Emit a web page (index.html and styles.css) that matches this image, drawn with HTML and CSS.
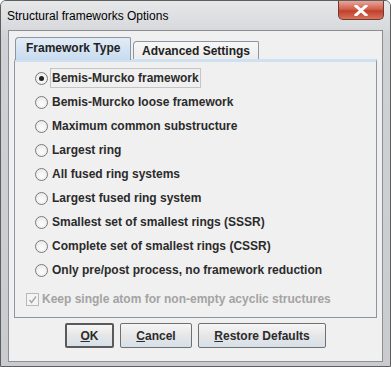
FILE: index.html
```html
<!DOCTYPE html>
<html>
<head>
<meta charset="utf-8">
<link rel="stylesheet" href="styles.css">
</head>
<body>
<div class="window">
  <div class="titlebar">
    <span class="title">Structural frameworks Options</span>
    <div class="close"><svg width="14" height="11" viewBox="0 0 14 11"><path d="M2 1 L12 10 M12 1 L2 10" stroke="#fff" stroke-width="3" stroke-linecap="square"/></svg></div>
  </div>
  <div class="client">
    <div class="tabs">
      <div class="tab active">Framework Type</div>
      <div class="tab">Advanced Settings</div>
    </div>
    <div class="panel">
      <div class="row"><span class="radio on"></span><span class="label focus">Bemis-Murcko framework</span></div>
      <div class="row"><span class="radio"></span><span class="label">Bemis-Murcko loose framework</span></div>
      <div class="row"><span class="radio"></span><span class="label">Maximum common substructure</span></div>
      <div class="row"><span class="radio"></span><span class="label">Largest ring</span></div>
      <div class="row"><span class="radio"></span><span class="label">All fused ring systems</span></div>
      <div class="row"><span class="radio"></span><span class="label">Largest fused ring system</span></div>
      <div class="row"><span class="radio"></span><span class="label">Smallest set of smallest rings (SSSR)</span></div>
      <div class="row"><span class="radio"></span><span class="label">Complete set of smallest rings (CSSR)</span></div>
      <div class="row"><span class="radio"></span><span class="label">Only pre/post process, no framework reduction</span></div>
      <div class="row check-row"><span class="check"><svg width="9" height="9" viewBox="0 0 9 9"><path d="M1.5 5 L3.5 7.5 L8 1.5" fill="none" stroke="#a8a8a8" stroke-width="1.4"/></svg></span><span class="label disabled">Keep single atom for non-empty acyclic structures</span></div>
    </div>
    <div class="buttons">
      <button class="btn default ok"><u>O</u>K</button>
      <button class="btn cancel"><u>C</u>ancel</button>
      <button class="btn restore"><u>R</u>estore Defaults</button>
    </div>
  </div>
</div>
</body>
</html>
```

FILE: styles.css
```css
html, body {
  margin: 0;
  padding: 0;
  background: #fff;
}
.window {
  width: 391px;
  height: 367px;
  box-sizing: border-box;
  border: 1px solid #5e5e5e;
  border-radius: 6px 6px 0 0;
  background: linear-gradient(#dfe0e2, #cfd1d4 40px, #c9cbce);
  display: flex;
  flex-direction: column;
  overflow: hidden;
}
.titlebar {
  height: 29px;
  display: flex;
  align-items: flex-start;
  position: relative;
  background: linear-gradient(#e6e7e9, #d8d9dc);
}
.title {
  font-family: "Liberation Sans", Arial, sans-serif;
  font-size: 12px;
  color: #000;
  margin: 8px 0 0 6px;
}
.close {
  position: absolute;
  right: 6px;
  top: 0;
  width: 46px;
  height: 19px;
  box-sizing: border-box;
  border: 1px solid #6e3a34;
  border-top: none;
  border-radius: 0 0 5px 5px;
  background: linear-gradient(#e6a79c, #d2604c 45%, #c0402c 55%, #d8725a);
  display: flex;
  align-items: center;
  justify-content: center;
}
.client {
  margin: 0 7px;
  height: 330px;
  border: 1px solid #8c8e92;
  background: #f0f0f0;
  display: flex;
  flex-direction: column;
  font-family: "Liberation Sans", Arial, sans-serif;
  font-weight: bold;
  font-size: 12px;
  color: #2b2b2b;
}
.tabs {
  display: flex;
  align-items: flex-end;
  margin: 6px 0 0 6px;
  height: 22px;
  position: relative;
  z-index: 1;
}
.tab {
  height: 18px;
  box-sizing: border-box;
  border: 1px solid #8c96a1;
  border-bottom: none;
  border-radius: 4px 2px 0 0;
  padding: 2px 0 0 8px;
  background: linear-gradient(#f7f7f7, #ececec);
  color: #222;
  width: 126px;
  margin-left: 2px;
}
.tab.active {
  height: 23px;
  width: 116px;
  padding: 3px 0 0 10px;
  background: linear-gradient(#e2ecf6, #c8dcef);
  margin-left: 0;
  margin-bottom: -1px;
  border-color: #8c96a1;
}
.panel {
  margin: 0 5px;
  height: 259px;
  box-sizing: border-box;
  border: 1px solid #8c96a1;
  border-top: 3px solid #cfe0f0;
  background: #f0f0f0;
  padding: 4px 0 0 0;
  display: flex;
  flex-direction: column;
}
.row {
  height: 24px;
  display: flex;
  align-items: center;
  padding-left: 20px;
}
.radio {
  width: 11px;
  height: 11px;
  border: 1px solid #7a7a7a;
  border-radius: 50%;
  background: radial-gradient(circle at 50% 60%, #fefefe, #e4e4e4);
  margin-right: 2px;
  position: relative;
  flex: none;
}
.radio.on::after {
  content: "";
  position: absolute;
  left: 3px;
  top: 3px;
  width: 5px;
  height: 5px;
  border-radius: 50%;
  background: #222;
}
.label {
  padding: 2px 1px;
  border: 1px solid transparent;
  white-space: nowrap;
}
.label.focus {
  border-color: #c5c5c5;
}
.check-row {
  margin-top: 5px;
  padding-left: 11px;
}
.check {
  width: 11px;
  height: 11px;
  border: 1px solid #b9b9b9;
  background: #f4f4f4;
  margin-right: 1px;
  display: flex;
  align-items: center;
  justify-content: center;
  flex: none;
}
.label.disabled {
  color: #a3a3a3;
}
.buttons {
  display: flex;
  justify-content: center;
  gap: 6px;
  margin-top: 5px;
}
.btn {
  height: 25px;
  box-sizing: border-box;
  border: 1px solid #707070;
  border-radius: 2px;
  background: linear-gradient(#f6f6f6, #e6e6e6 50%, #d6e0ea);
  font-family: "Liberation Sans", Arial, sans-serif;
  font-weight: bold;
  font-size: 12px;
  color: #2b2b2b;
  padding: 0;
}
.btn.default {
  border: 2px solid #5a5a5a;
}
.ok { width: 49px; }
.cancel { width: 72px; }
.restore { width: 128px; }
```
